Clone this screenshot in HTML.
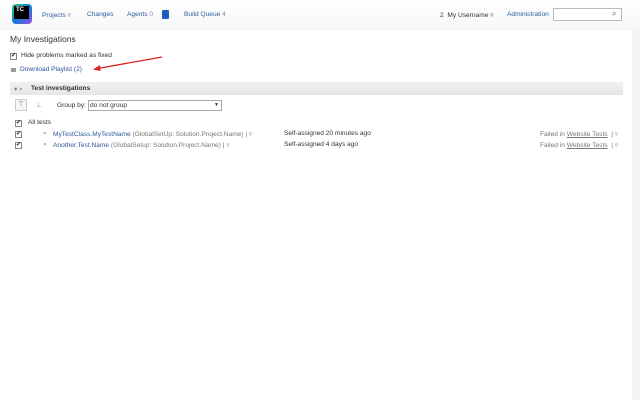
<!DOCTYPE html>
<html><head><style>
body{margin:0;width:640px;height:400px;background:#fff;font-family:"Liberation Sans",sans-serif;font-size:6.6px;color:#333;position:relative;overflow:hidden}
.a{position:absolute;white-space:nowrap}
.l{color:#2d5b9a}
.cb{position:absolute;width:5px;height:5px;border:1px solid #888;background:#fff;font-size:6px;line-height:5px;text-align:center;color:#222}
</style></head><body>
<div class="a" style="left:0;top:0;width:640px;height:30px;background:linear-gradient(#fff,#f6f7f8)"></div>
<div class="a" style="left:632px;top:30px;width:8px;height:370px;background:#f3f3f3"></div>
<div class="a" style="left:12px;top:4px;width:20px;height:20px;background:linear-gradient(135deg,#21d789,#0c7bd6 50%,#9b4ce6);border-radius:4px"></div>
<div class="a" style="left:14px;top:6px;width:13px;height:13px;background:#000;color:#fff;font-size:6px;font-weight:bold;padding-left:2px;line-height:9px">TC</div>
<div class="a l" style="left:42px;top:11px">Projects ▿</div>
<div class="a l" style="left:87px;top:11px">Changes</div>
<div class="a l" style="left:127px;top:11px">Agents <span style="color:#888">0</span></div>
<div class="a" style="left:162px;top:10px;width:7px;height:9px;background:#1f5fc0;border-radius:1px"></div>
<div class="a l" style="left:184px;top:11px">Build Queue <span style="color:#888">4</span></div>
<div class="a" style="left:440px;top:11px">2 &nbsp;My Username ▿</div>
<div class="a l" style="left:507px;top:11px">Administration</div>
<div class="a" style="left:553px;top:8px;width:67px;height:11px;border:1px solid #bbb;background:#fff"></div>
<div class="a" style="left:612px;top:9px;font-size:8px;color:#666">⌕</div>
<div class="a" style="left:10px;top:34px;font-size:8.5px;color:#333">My Investigations</div>
<div class="cb" style="left:10px;top:53px">✔</div>
<div class="a" style="left:21px;top:52px">Hide problems marked as fixed</div>
<div class="a" style="left:11px;top:68px;width:5px;height:4px;background:#999"></div>
<div class="a l" style="left:20px;top:66px;color:#2d4f9e">Download Playlist (2)</div>
<svg class="a" style="left:90px;top:55px" width="75" height="20"><line x1="72" y1="2" x2="5" y2="14" stroke="#d22" stroke-width="1.3"/><path d="M3 14.5 L10 10 L10.5 16 Z" fill="#d22"/></svg>
<div class="a" style="left:10px;top:82px;width:613px;height:13px;background:linear-gradient(#f0f0f0,#e6e6e6)"></div>
<div class="a" style="left:14px;top:85px;color:#777">▾ ⌕</div>
<div class="a" style="left:31px;top:85px;font-weight:bold;color:#333">Test investigations</div>
<div class="a" style="left:15px;top:99px;width:10px;height:10px;border:1px solid #ccc;background:#f6f6f6;text-align:center;line-height:9px;color:#666">⊤</div>
<div class="a" style="left:36px;top:101px;color:#888">⊥</div>
<div class="a" style="left:57px;top:102px">Group by:</div>
<div class="a" style="left:88px;top:100px;width:131px;height:9px;border:1px solid #aaa;background:#fff;line-height:9px;padding-left:1px">do not group<span style="position:absolute;right:2px;font-size:5px">▼</span></div>
<div class="cb" style="left:15px;top:120px">✔</div>
<div class="a" style="left:28px;top:119px">All tests</div>
<div class="cb" style="left:15px;top:131px">✔</div>
<div class="a" style="left:43px;top:130px;color:#777">⌕</div>
<div class="a" style="left:53px;top:130px;color:#777"><span class="l">MyTestClass.MyTestName</span> (GlobalSetUp: Solution.Project.Name) | ▿</div>
<div class="a" style="left:284px;top:130px">Self-assigned 20 minutes ago</div>
<div class="a" style="left:540px;top:130px;color:#777">Failed in <u>Website Tests</u> &nbsp;| ▿</div>
<div class="cb" style="left:15px;top:142px">✔</div>
<div class="a" style="left:43px;top:141px;color:#777">⌕</div>
<div class="a" style="left:53px;top:141px;color:#777"><span class="l">Another.Test.Name</span> (GlobalSetup: Solution.Project.Name) | ▿</div>
<div class="a" style="left:284px;top:141px">Self-assigned 4 days ago</div>
<div class="a" style="left:540px;top:141px;color:#777">Failed in <u>Website Tests</u> &nbsp;| ▿</div>
</body></html>
